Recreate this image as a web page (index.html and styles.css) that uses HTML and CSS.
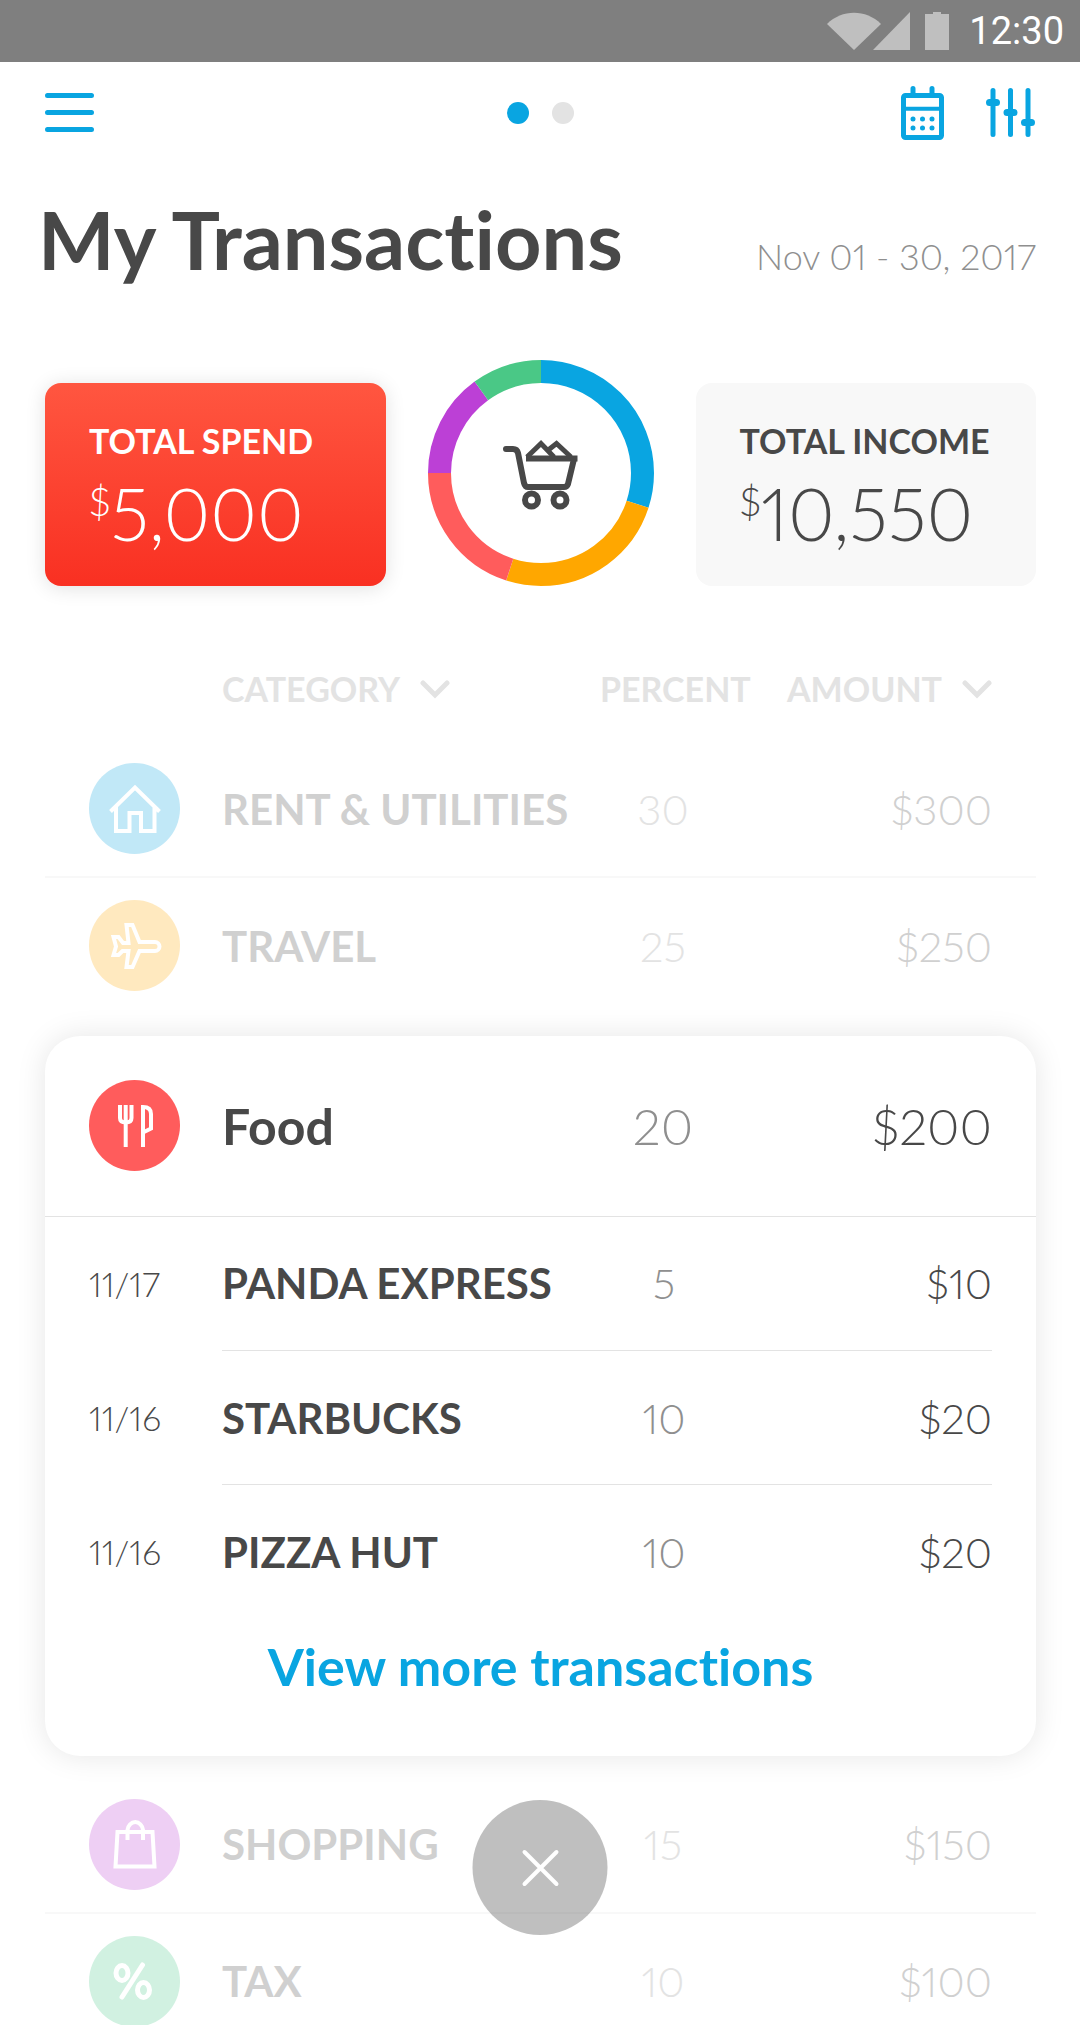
FILE: index.html
```html
<!DOCTYPE html>
<html lang="en">
<head>
<meta charset="utf-8">
<meta name="viewport" content="width=device-width, initial-scale=1">
<title>My Transactions</title>
<link rel="stylesheet" href="styles.css">
</head>
<body>
<div class="status-bar">
  <svg class="status-icons" width="122" height="38" viewBox="0 0 122 38" aria-hidden="true">
    <path d="M0 12C15-3 39-3 54 12L27 38Z"/>
    <path d="M83 0V38H46Z"/>
    <path d="M98 2h8V0h8v2h8v36H98Z"/>
  </svg>
  <time class="clock">12:30</time>
</div>

<header class="app-bar">
  <div class="bar-side">
    <button class="icon-button" type="button" aria-label="Menu">
      <svg width="49" height="39" viewBox="0 0 49 39"><path class="line round" stroke-width="5" d="M2.500 2.500H46.500M2.500 19.500H46.500M2.500 36.500H46.500"/></svg>
    </button>
  </div>
  <div class="pager">
    <button class="dot current" type="button" aria-label="Page 1"></button>
    <button class="dot" type="button" aria-label="Page 2"></button>
  </div>
  <div class="bar-side end">
    <button class="icon-button" type="button" aria-label="Calendar">
      <svg width="43" height="54" viewBox="0 0 43 54">
        <rect class="line" stroke-width="5" x="2.500" y="9.500" width="38" height="42" rx="2"/>
        <path class="line" stroke-width="4" d="M2 22.700H41"/>
        <path class="line round" stroke-width="5" d="M12 2.500V9M31 2.500V9"/>
        <path class="line round" stroke-width="5" d="M12 33h.01M21.500 33h.01M31 33h.01M12 42h.01M21.500 42h.01M31 42h.01"/>
      </svg>
    </button>
    <button class="icon-button" type="button" aria-label="Filters">
      <svg width="49" height="49" viewBox="0 0 49 49">
        <path class="line round" stroke-width="5" d="M7 2.500V46.500M24.500 2.500V46.500M42 2.500V46.500"/>
        <path class="line round" stroke-width="7" d="M3.500 14.500H10.500M21 24.500H28M38.500 34.500H45.500"/>
      </svg>
    </button>
  </div>
</header>

<main>
  <div class="title-row">
    <h1>My Transactions</h1>
    <p class="period">Nov 01 - 30, 2017</p>
  </div>

  <section class="summary">
    <div class="total spend">
      <h2>TOTAL SPEND</h2>
      <p class="sum"><span class="currency">$</span><span>5,000</span></p>
    </div>
    <svg class="ring" viewBox="0 0 226 226" role="img" aria-label="Spending by category">
      <g fill="none" stroke-width="23" transform="rotate(-90 113 113)">
        <circle cx="113" cy="113" r="101.500" pathLength="100" stroke="#09a5e1" stroke-dasharray="30 70"/>
        <circle cx="113" cy="113" r="101.500" pathLength="100" stroke="#ffa700" stroke-dasharray="25 75" stroke-dashoffset="-30"/>
        <circle cx="113" cy="113" r="101.500" pathLength="100" stroke="#ff5c5c" stroke-dasharray="20 80" stroke-dashoffset="-55"/>
        <circle cx="113" cy="113" r="101.500" pathLength="100" stroke="#bc40d6" stroke-dasharray="15 85" stroke-dashoffset="-75"/>
        <circle cx="113" cy="113" r="101.500" pathLength="100" stroke="#4ac886" stroke-dasharray="10 90" stroke-dashoffset="-90"/>
      </g>
      <g fill="none" stroke="#484848" stroke-width="6" transform="translate(62 60)">
        <path stroke-linecap="round" d="M16 29H23Q27 29 28 33L34 63Q35 67 38 67H74Q77 67 78 64L84 39"/>
        <path d="M36 38.500H87.500"/>
        <path stroke-width="5" d="M37 37L51 23.500L64 37M57 31L66.500 23.500L81 37"/>
        <circle cx="41.500" cy="80" r="6.500"/>
        <circle cx="70" cy="80" r="6.500"/>
      </g>
    </svg>
    <div class="total income">
      <h2>TOTAL INCOME</h2>
      <p class="sum"><span class="currency">$</span><span>10,550</span></p>
    </div>
  </section>

  <table class="ledger faded">
    <colgroup><col class="col-icon"><col><col class="col-percent"><col class="col-amount"></colgroup>
    <thead>
      <tr>
        <td></td>
        <th scope="col"><button class="sort" type="button">CATEGORY<svg width="30" height="20" viewBox="0 0 30 20"><path d="M3 4L15 16L27 4"/></svg></button></th>
        <th scope="col" class="percent">PERCENT</th>
        <th scope="col" class="amount"><button class="sort" type="button">AMOUNT<svg width="30" height="20" viewBox="0 0 30 20"><path d="M3 4L15 16L27 4"/></svg></button></th>
      </tr>
    </thead>
    <tbody>
      <tr class="ruled">
        <td class="icon"><svg class="badge" viewBox="0 0 91 91"><circle cx="45.500" cy="45.500" r="45.500" fill="#c1e8f7"/><path d="M21.500 48.500L46 24.500L70.500 48.500M27 44V68H40.500V50H52V68H65.500V44"/></svg></td>
        <th scope="row">RENT &amp; UTILITIES</th><td class="percent">30</td><td class="amount">$300</td>
      </tr>
      <tr>
        <td class="icon"><svg class="badge" viewBox="0 0 91 91"><circle cx="45.500" cy="45.500" r="45.500" fill="#ffe9bf"/><path d="M50.500 42H66A4.500 4.500 0 0 1 66 51H50.500L43.500 67H37.500L39.500 51H33.500L29.500 55H24.500L27 46.500L24.500 37H29.500L34 43H39.500L37.500 25H43.500Z"/></svg></td>
        <th scope="row">TRAVEL</th><td class="percent">25</td><td class="amount">$250</td>
      </tr>
    </tbody>
  </table>

  <section class="card">
    <table class="ledger open">
      <colgroup><col class="col-icon"><col><col class="col-percent"><col class="col-amount"></colgroup>
      <tbody>
        <tr class="ruled">
          <td class="icon"><svg class="badge" viewBox="0 0 91 91"><circle cx="45.500" cy="45.500" r="45.500" fill="#ff5c5c"/><path d="M31 25V38Q31 42.500 36.700 42.500Q42.500 42.500 42.500 38V25M36.700 25V67M54 67V27Q62 27 62 34V48.500L54 52.500"/></svg></td>
          <th scope="row">Food</th><td class="percent">20</td><td class="amount">$200</td>
        </tr>
      </tbody>
    </table>
    <div class="details">
      <table class="ledger entries">
        <colgroup><col class="col-date"><col><col class="col-percent"><col class="col-sum"></colgroup>
        <tbody>
          <tr><td class="date">11/17</td><th scope="row">PANDA EXPRESS</th><td class="percent">5</td><td class="amount">$10</td></tr>
          <tr><td class="date">11/16</td><th scope="row">STARBUCKS</th><td class="percent">10</td><td class="amount">$20</td></tr>
          <tr><td class="date">11/16</td><th scope="row">PIZZA HUT</th><td class="percent">10</td><td class="amount">$20</td></tr>
        </tbody>
      </table>
    </div>
    <a class="more" href="#more">View more transactions</a>
  </section>

  <table class="ledger faded">
    <colgroup><col class="col-icon"><col><col class="col-percent"><col class="col-amount"></colgroup>
    <tbody>
      <tr class="ruled">
        <td class="icon"><svg class="badge" viewBox="0 0 91 91"><circle cx="45.500" cy="45.500" r="45.500" fill="#eecff4"/><path d="M28.500 33H63.500L65.500 67.500H26.500ZM38.500 41V31A7.800 9 0 0 1 54 31V41"/></svg></td>
        <th scope="row">SHOPPING</th><td class="percent">15</td><td class="amount">$150</td>
      </tr>
      <tr>
        <td class="icon"><svg class="badge bold" viewBox="0 0 91 91"><circle cx="45.500" cy="45.500" r="45.500" fill="#d1f1e1"/><path d="M53.500 29L33 61"/><ellipse cx="33" cy="37" rx="6" ry="7.500"/><ellipse cx="54.500" cy="54" rx="6" ry="7.500"/></svg></td>
        <th scope="row">TAX</th><td class="percent">10</td><td class="amount">$100</td>
      </tr>
    </tbody>
  </table>
</main>

<button class="close" type="button" aria-label="Close">
  <svg width="38" height="38" viewBox="0 0 38 38"><path d="M3 3L35 35M35 3L3 35"/></svg>
</button>
</body>
</html>
```
FILE: styles.css
```css
:root {
  --blue: #09a5e1;
  --ink: #484848;
  --rule: #e3e3e3;
}

* { box-sizing: border-box; }

body {
  height: 100vh;
  margin: 0;
  overflow: hidden auto;
  scrollbar-width: none;
  background: #fff;
  color: var(--ink);
  font-family: Lato, sans-serif;
  font-variant-ligatures: none;
  font-variant-numeric: proportional-nums;
}

h1, h2, p { margin: 0; }

button {
  padding: 0;
  border: 0;
  background: none;
  color: inherit;
  font: inherit;
  cursor: pointer;
}

svg { display: block; }

.status-bar {
  display: flex;
  align-items: center;
  justify-content: flex-end;
  gap: 20px;
  height: 62px;
  padding-right: 16px;
  background: #7f7f7f;
}

.status-icons { fill: #bfbfbf; }

.clock {
  color: #fff;
  font-family: Roboto, sans-serif;
  font-size: 38px;
  font-variant-numeric: tabular-nums;
  line-height: 44px;
}

.app-bar {
  display: flex;
  align-items: center;
  height: 101px;
  padding: 0 45px;
}

.bar-side {
  display: flex;
  flex: 1;
  align-items: center;
  gap: 42px;
}

.bar-side.end { justify-content: flex-end; }

.line { fill: none; stroke: var(--blue); }
.round { stroke-linecap: round; }

.pager { display: flex; gap: 23px; }

.dot {
  width: 22px;
  height: 22px;
  border-radius: 50%;
  background: var(--rule);
}

.dot.current { background: var(--blue); }

main { padding: 0 44px 0 45px; }

.title-row {
  display: flex;
  align-items: baseline;
  justify-content: space-between;
  padding: 28px 0 73px;
}

h1 {
  margin-left: -7px;
  font-size: 81px;
  font-weight: 700;
  line-height: 96px;
}

.period {
  color: #8f8f8f;
  font-size: 36px;
  font-weight: 300;
}

.summary {
  display: grid;
  grid-template-columns: 1fr 226px 1fr;
  gap: 42px;
  align-items: end;
  margin-bottom: 50px;
}

.total {
  height: 203px;
  padding: 37px 44px 0;
  border-radius: 16px;
}

.spend {
  background: linear-gradient(#ff5640, #f93022);
  box-shadow: 0 2px 20px rgba(0, 0, 0, .12);
  color: #fff;
}

.income { background: #f8f8f8; }

.total h2 {
  font-size: 34px;
  font-weight: 700;
  line-height: 41px;
  white-space: nowrap;
}

.sum {
  display: flex;
  align-items: flex-start;
  margin-top: 10px;
  font-size: 72px;
  font-weight: 300;
  line-height: 84px;
}

.currency {
  font-size: 40px;
  line-height: 60px;
}

.ledger {
  width: 100%;
  border-collapse: collapse;
  table-layout: fixed;
  font-size: 42px;
  font-weight: 300;
}

.col-icon { width: 177px; }
.col-date { width: 133px; }
.col-percent { width: 168px; }
.col-amount { width: 279px; }
.col-sum { width: 234px; }

.ledger td, .ledger th { padding: 0; }

.ledger th {
  font-weight: 700;
  text-align: left;
  white-space: nowrap;
}

.ledger thead tr { height: 105px; }
.ledger tbody tr { height: 136px; }

.ledger thead th {
  color: var(--rule);
  font-size: 34px;
}

.sort {
  display: inline-flex;
  align-items: center;
  gap: 20px;
}

.sort path {
  fill: none;
  stroke: var(--rule);
  stroke-width: 5;
  stroke-linecap: round;
}

.ledger .icon { padding-left: 44px; }

.badge { width: 91px; height: 91px; }

.badge path, .badge ellipse {
  fill: none;
  stroke: #fff;
  stroke-width: 4;
}

.badge.bold path, .badge.bold ellipse {
  stroke-width: 5;
  stroke-linecap: round;
}

.ledger .percent {
  padding-right: 20px;
  color: #8f8f8f;
  text-align: center;
}

.ledger .amount {
  padding-right: 44px;
  text-align: right;
}

.ledger thead .percent {
  padding: 0 0 0 11px;
  color: var(--rule);
  text-align: left;
}

.faded tbody th, .faded tbody .amount { color: #d0d0d0; }
.faded tbody .percent { color: #e3e3e3; }
.faded .ruled { border-bottom: 2px solid #f8f8f8; }

.card {
  margin: 23px 0 21px;
  border-radius: 35px;
  background: #fff;
  box-shadow: 0 0 30px rgba(0, 0, 0, .1);
}

.open { font-size: 50px; }
.ledger.open tr { height: 180px; }
.open .ruled { border-bottom: 1px solid var(--rule); }

.details { padding: 0 44px; }

.entries .date { font-size: 34px; }
.ledger.entries .amount { padding-right: 0; }
.ledger.entries tr { height: 134px; }
.entries tr:not(:last-child) > :not(.date) { border-bottom: 1px solid var(--rule); }

.more {
  display: block;
  padding: 17px 0 60px;
  color: var(--blue);
  font-size: 52px;
  font-weight: 700;
  line-height: 60px;
  text-align: center;
  text-decoration: none;
}

.close {
  position: fixed;
  bottom: 90px;
  left: 50%;
  display: grid;
  place-items: center;
  width: 135px;
  height: 135px;
  border-radius: 50%;
  background: rgba(0, 0, 0, .25);
  transform: translateX(-50%);
}

.close path {
  fill: none;
  stroke: #fff;
  stroke-width: 4;
  stroke-linecap: round;
}
```
